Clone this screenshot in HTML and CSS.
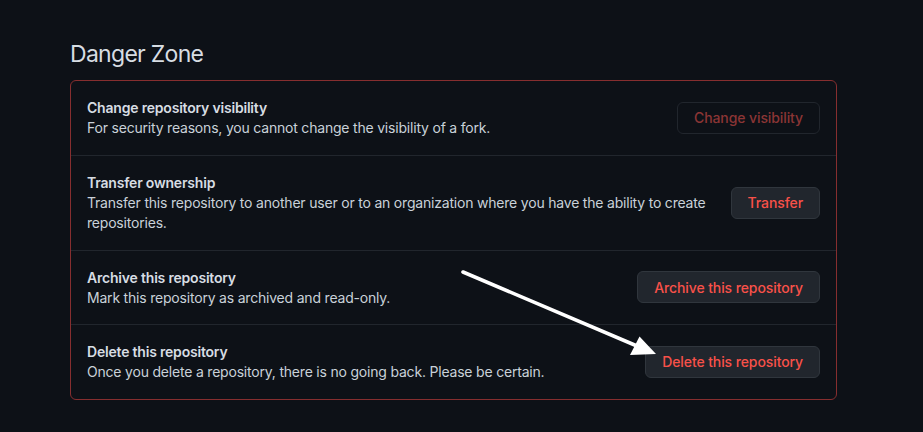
FILE: index.html
```html
<!DOCTYPE html>
<html lang="en">
<head>
<meta charset="utf-8">
<title>Danger Zone</title>
<link rel="stylesheet" href="styles.css">
</head>
<body>
<main class="page">
  <h2 class="heading">Danger Zone</h2>
  <div class="danger-box">
    <div class="row">
      <div class="row-text">
        <strong class="row-title">Change repository visibility</strong>
        <p class="row-desc">For security reasons, you cannot change the visibility of a fork.</p>
      </div>
      <button class="btn btn-disabled" type="button">Change visibility</button>
    </div>
    <div class="row">
      <div class="row-text">
        <strong class="row-title">Transfer ownership</strong>
        <p class="row-desc">Transfer this repository to another user or to an organization where you have the ability to create repositories.</p>
      </div>
      <button class="btn" type="button">Transfer</button>
    </div>
    <div class="row">
      <div class="row-text">
        <strong class="row-title">Archive this repository</strong>
        <p class="row-desc">Mark this repository as archived and read-only.</p>
      </div>
      <button class="btn" type="button">Archive this repository</button>
    </div>
    <div class="row">
      <div class="row-text">
        <strong class="row-title">Delete this repository</strong>
        <p class="row-desc">Once you delete a repository, there is no going back. Please be certain.</p>
      </div>
      <button class="btn" type="button">Delete this repository</button>
    </div>
  </div>
</main>
<svg class="arrow" width="923" height="432" viewBox="0 0 923 432" aria-hidden="true">
  <line x1="463" y1="272" x2="637" y2="346" stroke="#ffffff" stroke-width="3.6" stroke-linecap="round"/>
  <polygon points="630,355 639.5,336.5 656,354" fill="#ffffff"/>
</svg>
</body>
</html>
```

FILE: styles.css
```css
html, body {
  margin: 0;
  padding: 0;
  background: #0d1117;
}

body {
  font-family: Inter, "Noto Sans", "Liberation Sans", sans-serif;
  color: #c9d1d9;
  font-size: 14px;
  line-height: 21px;
  letter-spacing: -0.2px;
  position: relative;
  width: 923px;
  height: 432px;
  overflow: hidden;
}

.page {
  padding: 36px 0 0 70px;
}

.heading {
  margin: 0 0 8px 0;
  font-size: 23px;
  line-height: 36px;
  font-weight: 400;
  letter-spacing: -0.7px;
  color: #d7dde3;
}

.danger-box {
  width: 767px;
  box-sizing: border-box;
  border: 1px solid #862e2f;
  border-radius: 6px;
}

.row {
  display: flex;
  align-items: center;
  justify-content: space-between;
  gap: 24px;
  padding: 16px;
  border-top: 1px solid #21262d;
}

.row:first-child {
  border-top: none;
}

.row-text {
  flex: 1 1 auto;
  min-width: 0;
}

.row-title {
  display: block;
  font-weight: 600;
  color: #d7dde3;
}

.row-desc {
  margin: 0;
  line-height: 20.5px;
  color: #c9d1d9;
}

.btn {
  flex: 0 0 auto;
  height: 32px;
  padding: 0 16px;
  box-sizing: border-box;
  font-family: inherit;
  font-size: 14px;
  font-weight: 500;
  letter-spacing: -0.1px;
  color: #f85149;
  background: #21262d;
  border: 1px solid #30363d;
  border-radius: 6px;
}

.btn-disabled {
  background: #0d1117;
  border-color: #21262d;
  color: #8b3535;
}

.arrow {
  position: absolute;
  left: 0;
  top: 0;
  pointer-events: none;
}
```
